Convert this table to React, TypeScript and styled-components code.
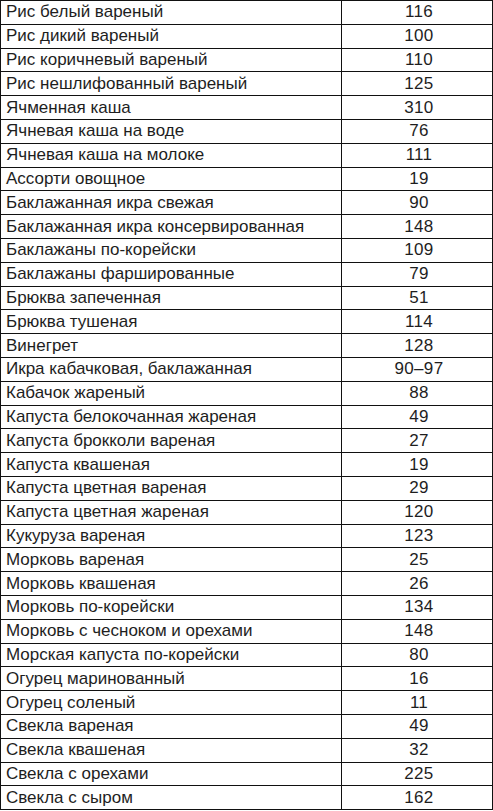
import React from 'react';
import styled, { createGlobalStyle } from 'styled-components';

const GlobalStyle = createGlobalStyle`
  html, body {
    margin: 0;
    padding: 0;
    background: #fff;
  }
`;

const Table = styled.div`
  display: grid;
  grid-template-columns: 341px 151px;
  grid-auto-rows: 23.8px;
  width: 493px;
  border-left: 1px solid #111;
  border-top: 1px solid #111;
  box-sizing: border-box;
  font-family: 'Liberation Sans', Arial, sans-serif;
  font-size: 17px;
  color: #1e1e1e;
`;

const Cell = styled.div<{ $center?: boolean }>`
  box-sizing: border-box;
  border-right: 1px solid #111;
  border-bottom: 1px solid #111;
  display: flex;
  align-items: center;
  justify-content: ${(p) => (p.$center ? 'center' : 'flex-start')};
  padding-left: ${(p) => (p.$center ? '4px' : '5px')};
  letter-spacing: ${(p) => (p.$center ? '0.3px' : '0')};
  white-space: nowrap;
  overflow: hidden;
`;

const rows: [string, string][] = [
  ['Рис белый вареный', '116'],
  ['Рис дикий вареный', '100'],
  ['Рис коричневый вареный', '110'],
  ['Рис нешлифованный вареный', '125'],
  ['Ячменная каша', '310'],
  ['Ячневая каша на воде', '76'],
  ['Ячневая каша на молоке', '111'],
  ['Ассорти овощное', '19'],
  ['Баклажанная икра свежая', '90'],
  ['Баклажанная икра консервированная', '148'],
  ['Баклажаны по-корейски', '109'],
  ['Баклажаны фаршированные', '79'],
  ['Брюква запеченная', '51'],
  ['Брюква тушеная', '114'],
  ['Винегрет', '128'],
  ['Икра кабачковая, баклажанная', '90–97'],
  ['Кабачок жареный', '88'],
  ['Капуста белокочанная жареная', '49'],
  ['Капуста брокколи вареная', '27'],
  ['Капуста квашеная', '19'],
  ['Капуста цветная вареная', '29'],
  ['Капуста цветная жареная', '120'],
  ['Кукуруза вареная', '123'],
  ['Морковь вареная', '25'],
  ['Морковь квашеная', '26'],
  ['Морковь по-корейски', '134'],
  ['Морковь с чесноком и орехами', '148'],
  ['Морская капуста по-корейски', '80'],
  ['Огурец маринованный', '16'],
  ['Огурец соленый', '11'],
  ['Свекла вареная', '49'],
  ['Свекла квашеная', '32'],
  ['Свекла с орехами', '225'],
  ['Свекла с сыром', '162'],
];

export default function App() {
  return (
    <>
      <GlobalStyle />
      <Table>
        {rows.map(([name, kcal]) => (
          <React.Fragment key={name}>
            <Cell>{name}</Cell>
            <Cell $center>{kcal}</Cell>
          </React.Fragment>
        ))}
      </Table>
    </>
  );
}
